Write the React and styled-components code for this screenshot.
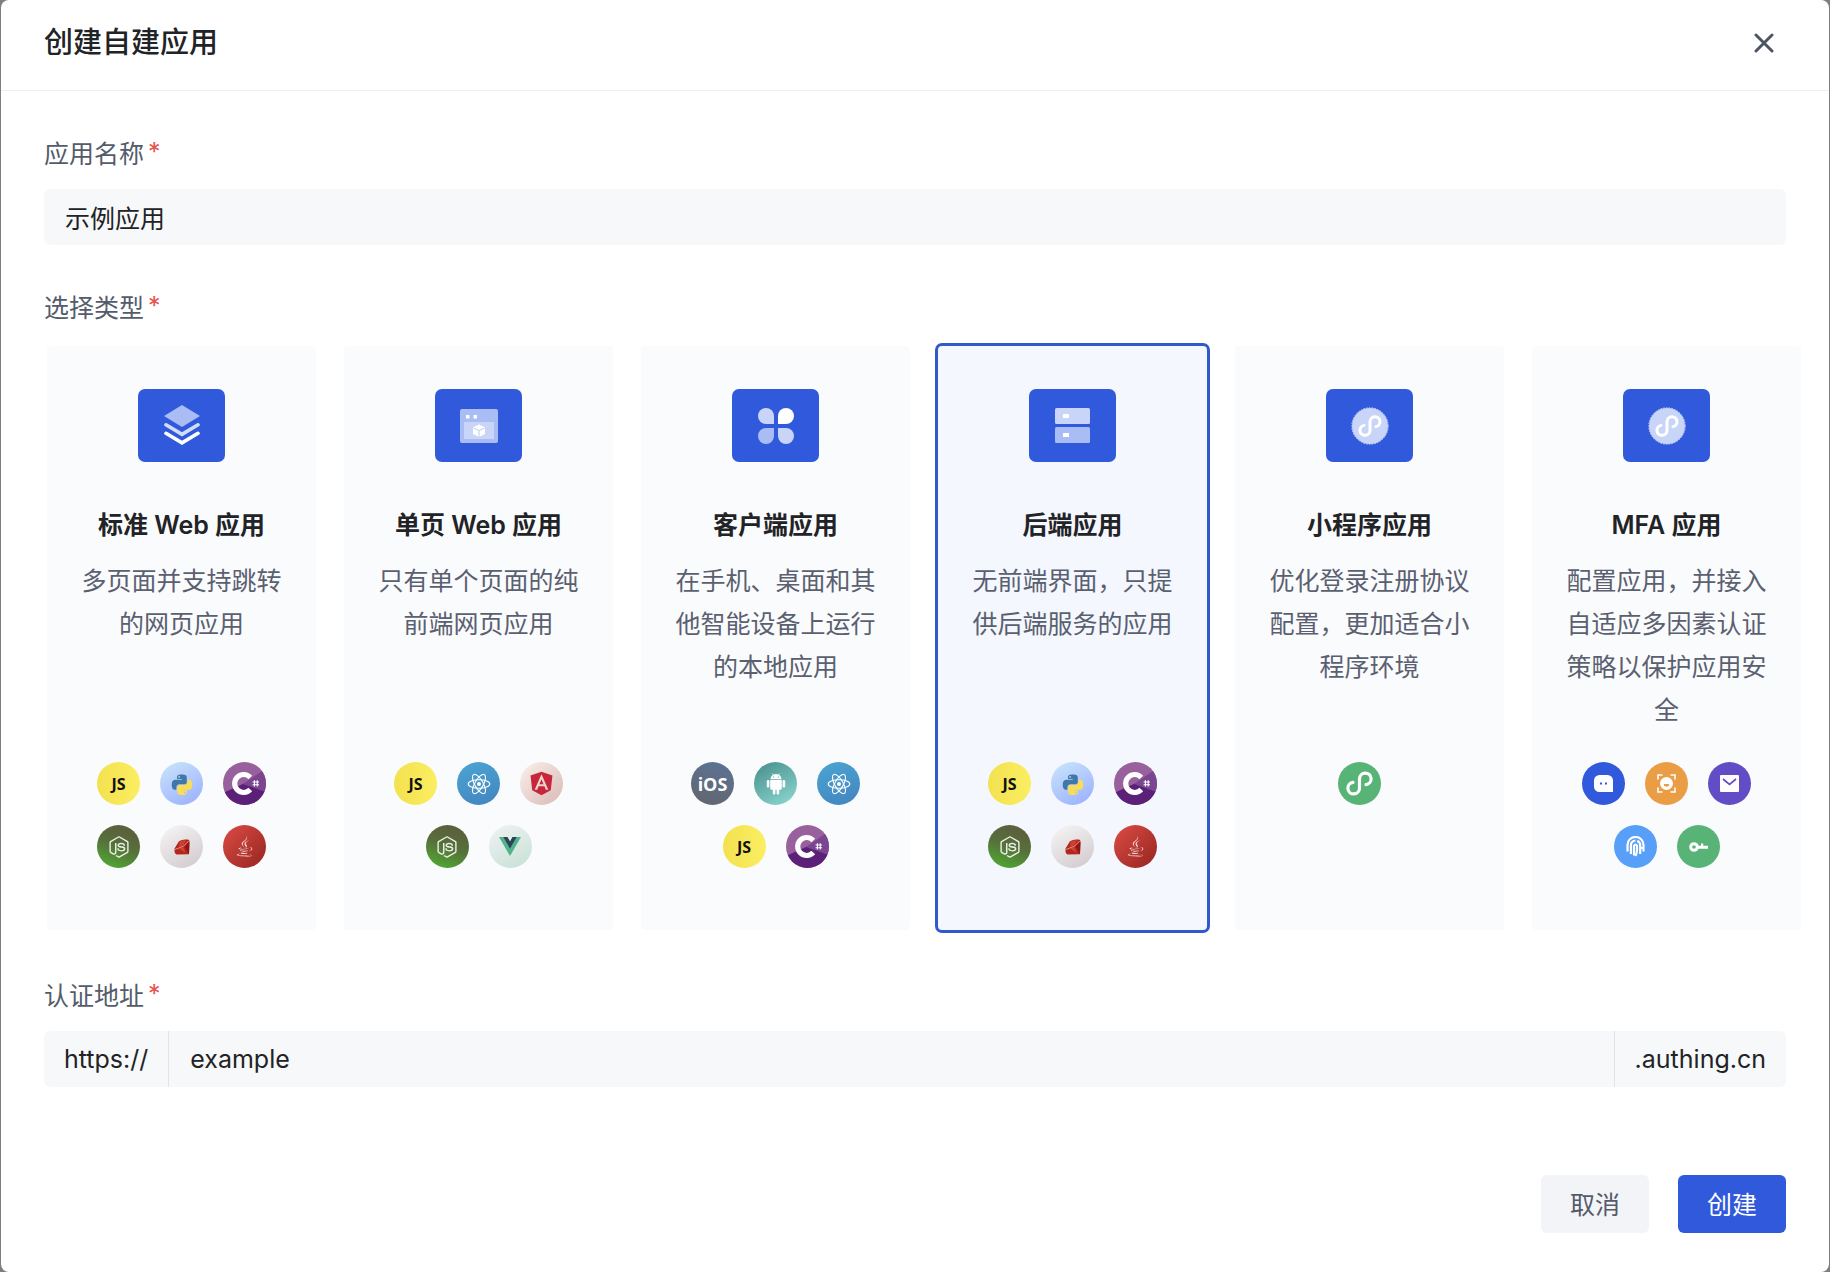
import React, { useState } from 'react'
import styled, { createGlobalStyle } from 'styled-components'
import { FaAngular, FaJava, FaNodeJs } from 'react-icons/fa'

const JsIcon = () => <BadgeText $color="#111" $size={16}>JS</BadgeText>

const IosIcon = () => <BadgeText $color="#fff" $size={18}>iOS</BadgeText>

const PythonIcon = () => (
  <svg width="22" height="22" viewBox="0 0 448 480">
    <path fill="#3f77a8" d="M167.8 248.1h106.8c29.7 0 53.4-24.5 53.4-54.3V91.9c0-29-24.4-50.7-53.4-55.6-35.8-5.9-74.7-5.6-106.8.1-45.2 8-53.4 24.7-53.4 55.6v40.7h106.9v13.6h-147c-31.1 0-58.3 18.7-66.8 54.2-9.8 40.7-10.2 66.1 0 108.6 7.6 31.6 25.7 54.2 56.8 54.2H101v-48.8c0-35.3 30.5-66.4 66.8-66.4zm-6.7-142.6c-11.1 0-20.1-9.1-20.1-20.3.1-11.3 9-20.4 20.1-20.4 11 0 20.1 9.2 20.1 20.4s-9 20.3-20.1 20.3z" />
    <path fill="#fbdc55" d="M439.8 200.5c-7.7-30.9-22.3-54.2-53.4-54.2h-40.1v47.4c0 36.8-31.2 67.8-66.8 67.8H172.7c-29.2 0-53.4 25-53.4 54.3v101.8c0 29 25.2 46 53.4 54.3 33.8 9.9 66.3 11.7 106.8 0 26.9-7.8 53.4-23.5 53.4-54.3v-40.7H226.2v-13.6h160.2c31.1 0 42.6-21.7 53.4-54.2 11.2-33.5 10.7-65.7 0-108.6zM286.2 404c11.1 0 20.1 9.1 20.1 20.3 0 11.3-9 20.4-20.1 20.4-11 0-20.1-9.2-20.1-20.4.1-11.3 9.1-20.3 20.1-20.3z" />
  </svg>
)

const CsharpIcon = () => (
  <svg width="43" height="43" viewBox="0 0 43 43">
    <path fill="#5b2077" d="M0 31L21 21.5 43 30v13H0z" />
    <path fill="#7b4690" d="M20 22L39 9l4 6v15z" />
    <path fill="none" stroke="#fff" strokeWidth="5.2" d="M27.3 15.4A9 9 0 1 0 27.3 27.6" />
    <path fill="none" stroke="#fff" strokeWidth="1.1" d="M31.4 18.2v6.4M34.2 18.2v6.4M29.6 20h6.4M29.6 22.8h6.4" />
  </svg>
)

const RubyIcon = () => (
  <svg width="16" height="16" viewBox="0 0 16 16">
    <path fill="#b3261c" d="M5 2.2Q8 .4 11.500 .5H14Q15.600 .8 15.500 3L15 15.200 2.500 15.500Q.3 15 .5 12V9.500z" />
    <path fill="#8e1710" d="M10.500 7.500L15.400 3 15 15z" />
    <path fill="#cf4034" d="M5.500 3Q9 .8 12 1.500L9.500 6 5 8zM5 9.500l4.500-1.500 2 6z" />
    <path fill="none" stroke="#eebbb4" strokeWidth="0.7" d="M.8 10.500L4.800 9l5-2L14.600 2" />
  </svg>
)

const ReactIcon = () => (
  <svg width="24" height="24" viewBox="-12 -12 24 24" fill="none" stroke="#fff" strokeWidth="1.1">
    <circle r="2" fill="#fff" stroke="none" />
    <ellipse rx="10.8" ry="4.2" />
    <ellipse rx="10.8" ry="4.2" transform="rotate(60)" />
    <ellipse rx="10.8" ry="4.2" transform="rotate(120)" />
  </svg>
)

const VueIcon = () => (
  <svg width="22" height="19" viewBox="0 0 22 19">
    <path fill="#51b389" d="M0 0h22L11 19z" />
    <path fill="#2f4358" d="M4.3 0H8.6L11 4.2 13.4 0h4.3L11 11.6z" />
    <path fill="#e5efec" d="M8.6 0h4.8L11 4.2z" />
  </svg>
)

const AndroidIcon = () => (
  <svg width="20" height="22" viewBox="0 0 20 22" fill="#fff">
    <path d="M4.5 6.3a5.5 5.3 0 0 1 11 0z" />
    <path d="M6.3 0.5l1.4 2M13.7 0.5l-1.4 2" stroke="#fff" strokeWidth="0.8" />
    <path d="M4.2 7h11.6v8.5a1.3 1.3 0 0 1-1.3 1.3h-1.3v3.4a1.3 1.3 0 0 1-2.6 0v-3.4H9.4v3.4a1.3 1.3 0 0 1-2.6 0v-3.4H5.5a1.3 1.3 0 0 1-1.3-1.3z" />
    <rect x="0.8" y="7" width="2.6" height="7.6" rx="1.3" />
    <rect x="16.6" y="7" width="2.6" height="7.6" rx="1.3" />
    <circle cx="7.6" cy="4" r="0.6" fill="#5aa7a2" />
    <circle cx="12.4" cy="4" r="0.6" fill="#5aa7a2" />
  </svg>
)

const MiniIcon = () => (
  <svg width="43" height="43" viewBox="0 0 43 43">
    <path
      fill="none"
      stroke="#fff"
      strokeWidth="3.2"
      strokeLinecap="round"
      d="M28 22.6A5.8 5.8 0 1 0 21.5 16.8V26.2A5.8 5.8 0 1 1 15 20.4"
    />
  </svg>
)

const MessageIcon = () => (
  <svg width="19" height="17" viewBox="0 0 19 17">
    <path fill="#fff" d="M5.5 0h8A5.5 5.5 0 0 1 19 5.5V17H5.5A5.5 5.5 0 0 1 0 11.5v-6A5.5 5.5 0 0 1 5.5 0z" />
    <path fill="#3059dc" d="M6 7.5h2v2H6zM11 7.5h2v2h-2z" />
  </svg>
)

const FaceIcon = () => (
  <svg width="19" height="19" viewBox="0 0 19 19">
    <path fill="none" stroke="#fff" strokeWidth="1.6" d="M1 5.5V1h4.5M13.5 1H18v4.5M18 13.5V18h-4.5M5.5 18H1v-4.5" />
    <circle cx="9.5" cy="9.5" r="6.5" fill="#fff" />
    <path fill="#eb9d45" d="M6.8 10h5.4a2.7 2.7 0 0 1-5.4 0z" />
  </svg>
)

const MailIcon = () => (
  <svg width="19" height="17" viewBox="0 0 19 17">
    <rect width="19" height="17" rx="1" fill="#fff" />
    <path fill="none" stroke="#634dc6" strokeWidth="1.7" d="M3 4l6.5 5.5L16 4" />
  </svg>
)

const FingerIcon = () => (
  <svg width="19" height="21" viewBox="0 0 19 21" fill="none" stroke="#fff" strokeWidth="2.2">
    <path d="M1.5 15.5V9a8 8 0 0 1 16 0v6.5" />
    <path d="M4.9 18V9.5a4.7 4.7 0 0 1 4.6-5M14.2 18V9.5a4.7 4.7 0 0 0-3-4.6" />
    <path d="M8 19.5V9.8q1.6-2.6 3 0V14q0 3-1.5 6" />
    <path d="M14 12h3.500" />
  </svg>
)

const KeyIcon = () => (
  <svg width="19" height="10" viewBox="0 0 19 10">
    <circle cx="5" cy="5" r="3.3" fill="none" stroke="#fff" strokeWidth="3" />
    <path fill="#fff" d="M8.5 3.7H12V1.5h2.2v2.2H19v3H8.5z" />
  </svg>
)

// 每个标志的背景和图标
const badges = {
  js: { bg: 'linear-gradient(90deg, #f3e14f, #fbee62)', icon: <JsIcon /> },
  python: { bg: 'linear-gradient(150deg, #cbe6fb, #98adff)', icon: <PythonIcon /> },
  csharp: { bg: '#98609c', icon: <CsharpIcon /> },
  node: { bg: 'linear-gradient(200deg, #5b613c 20%, #56713a 50%, #4eb32f)', icon: <FaNodeJs size={22} color="#e9efe6" /> },
  ruby: { bg: 'linear-gradient(150deg, #f7f6f7, #d0c8cb)', icon: <RubyIcon /> },
  java: { bg: 'linear-gradient(135deg, #dc4b45, #96251f)', icon: <FaJava size={21} color="#f6dcda" /> },
  react: { bg: 'linear-gradient(160deg, #4ba5d2, #4384bf)', icon: <ReactIcon /> },
  angular: { bg: 'linear-gradient(135deg, #faf0ea, #d8b9b6)', icon: <FaAngular size={27} color="#c7263b" /> },
  vue: { bg: 'linear-gradient(150deg, #f0f3f4, #c6e0d4)', icon: <VueIcon /> },
  ios: { bg: 'linear-gradient(200deg, #5a7398, #64656b)', icon: <IosIcon /> },
  android: { bg: 'linear-gradient(150deg, #458d8b, #8fdad3)', icon: <AndroidIcon /> },
  mini: { bg: '#58b376', icon: <MiniIcon /> },
  message: { bg: '#3059dc', icon: <MessageIcon /> },
  face: { bg: '#eb9d45', icon: <FaceIcon /> },
  mail: { bg: '#634dc6', icon: <MailIcon /> },
  finger: { bg: '#579ff8', icon: <FingerIcon /> },
  key: { bg: '#58b376', icon: <KeyIcon /> },
}

const LayersTile = () => (
  <svg width="36" height="42" viewBox="0 0 36 42">
    <path fill="#a9bdf4" d="M18 0l18 11-18 11L0 11z" />
    <path fill="none" stroke="#d3ddfa" strokeWidth="3.6" strokeLinecap="round" d="M2 19.8l16 9.5 16-9.5" />
    <path fill="none" stroke="#fff" strokeWidth="3.6" strokeLinecap="round" d="M2 28.3L18 37.8l16-9.5" />
  </svg>
)

const WindowTile = () => (
  <svg width="38" height="34" viewBox="0 0 38 34">
    <rect width="38" height="34" rx="2" fill="#a9bdf4" />
    <rect x="4" y="13" width="30" height="17" fill="#c8d5f9" />
    <path fill="#fff" d="M6 6h3.5v3.5H6zM13.5 6H17v3.5h-3.5z" />
    <path fill="#fff" d="M19 15.5l6 2.7v6.8l-6 3-6-3v-6.8z" />
    <path fill="none" stroke="#bccbf7" strokeWidth="1" d="M13.5 19l5.5 2.5 5.5-2.5M19 21.5V28" />
  </svg>
)

const PetalTile = () => (
  <svg width="36" height="36" viewBox="0 0 36 36">
    <path fill="#c8d5f9" d="M8 0a8 8 0 0 1 8 8v8H8A8 8 0 0 1 8 0z" />
    <path fill="#fff" d="M28 0a8 8 0 0 1 0 16h-8V8a8 8 0 0 1 8-8z" />
    <path fill="#a9bdf4" d="M8 20h8v8a8 8 0 1 1-8-8z" />
    <path fill="#c8d5f9" d="M20 20h8a8 8 0 1 1-8 8z" />
  </svg>
)

const ServerTile = () => (
  <svg width="35" height="35" viewBox="0 0 35 35">
    <rect width="35" height="16" rx="1.5" fill="#c8d5f9" />
    <rect y="19" width="35" height="16" rx="1.5" fill="#a9bdf4" />
    <path fill="#fff" d="M8 6h6v4H8zM8 25h6v4H8z" />
  </svg>
)

const MiniTile = () => (
  <svg width="38" height="38" viewBox="0 0 38 38">
    <circle cx="19" cy="19" r="18" fill="#c8d5f9" />
    <circle cx="19" cy="19" r="18.2" fill="none" stroke="#c8d5f9" strokeWidth="1" strokeDasharray="1.6 1.2" />
    <path
      fill="none"
      stroke="#fff"
      strokeWidth="3"
      strokeLinecap="round"
      d="M25 19.6A5 5 0 1 0 19 14.6V23.4A5 5 0 1 1 13 18.4"
    />
  </svg>
)

const appTypes = [
  { id: 'web', title: '标准 Web 应用', desc: '多页面并支持跳转的网页应用', tile: <LayersTile />, list: ['js', 'python', 'csharp', 'node', 'ruby', 'java'] },
  { id: 'spa', title: '单页 Web 应用', desc: '只有单个页面的纯前端网页应用', tile: <WindowTile />, list: ['js', 'react', 'angular', 'node', 'vue'] },
  { id: 'native', title: '客户端应用', desc: '在手机、桌面和其他智能设备上运行的本地应用', tile: <PetalTile />, list: ['ios', 'android', 'react', 'js', 'csharp'] },
  { id: 'backend', title: '后端应用', desc: '无前端界面，只提供后端服务的应用', tile: <ServerTile />, list: ['js', 'python', 'csharp', 'node', 'ruby', 'java'] },
  { id: 'mini', title: '小程序应用', desc: '优化登录注册协议配置，更加适合小程序环境', tile: <MiniTile />, list: ['mini'] },
  { id: 'mfa', title: 'MFA 应用', desc: '配置应用，并接入自适应多因素认证策略以保护应用安全', tile: <MiniTile />, list: ['message', 'face', 'mail', 'finger', 'key'] },
]

const App = () => {
  const [name, setName] = useState('示例应用')
  const [domain, setDomain] = useState('example')
  const [type, setType] = useState('backend')

  return (
    <>
      <GlobalStyle />
      <Modal role="dialog" aria-labelledby="modal-title">
        <Header>
          <Title id="modal-title">创建自建应用</Title>
          <CloseButton type="button" aria-label="关闭">
            <svg width="20" height="20" viewBox="0 0 20 20">
              <path fill="none" stroke="#4b5563" strokeWidth="3" strokeLinecap="round" d="M2 2l16 16M18 2L2 18" />
            </svg>
          </CloseButton>
        </Header>

        <Form onSubmit={(e) => e.preventDefault()}>
          <Field>
            <Label htmlFor="app-name">应用名称<Star>*</Star></Label>
            <InputBox>
              <Input id="app-name" type="text" value={name} onChange={(e) => setName(e.target.value)} />
            </InputBox>
          </Field>

          <Field role="radiogroup" aria-labelledby="type-label">
            <Label as="div" id="type-label">选择类型<Star>*</Star></Label>
            <CardList>
              {appTypes.map((item) => (
                <Card key={item.id} $active={type === item.id}>
                  <Radio name="type" value={item.id} checked={type === item.id} onChange={() => setType(item.id)} />
                  <Tile>{item.tile}</Tile>
                  <CardTitle>{item.title}</CardTitle>
                  <Desc>{item.desc}</Desc>
                  <BadgeList>
                    {item.list.map((key) => (
                      <Badge key={key} $bg={badges[key].bg}>{badges[key].icon}</Badge>
                    ))}
                  </BadgeList>
                </Card>
              ))}
            </CardList>
          </Field>

          <Field>
            <Label htmlFor="app-domain">认证地址<Star>*</Star></Label>
            <InputBox>
              <Addon $side="right">https://</Addon>
              <Input id="app-domain" type="text" value={domain} onChange={(e) => setDomain(e.target.value)} />
              <Addon $side="left">.authing.cn</Addon>
            </InputBox>
          </Field>

          <Footer>
            <Button type="button">取消</Button>
            <Button type="submit" $primary>创建</Button>
          </Footer>
        </Form>
      </Modal>
    </>
  )
}

export default App

const GlobalStyle = createGlobalStyle`
  * {
    box-sizing: border-box;
  }

  body {
    margin: 0;
    background: #7f7f7f;
    font-family: Inter, "Noto Sans CJK SC", sans-serif;
    font-size: 25px;
    color: #222326;
  }

  input, button {
    font: inherit;
    color: inherit;
  }
`

const Modal = styled.div`
  margin: 0 1px;
  background: #fff;
  border-radius: 8px;
`

const Header = styled.header`
  display: flex;
  justify-content: space-between;
  align-items: center;
  height: 91px;
  padding: 0 53px 5px 43px;
  border-bottom: 1px solid #eeeff1;
`

const Title = styled.h1`
  margin: 0;
  font-size: 29px;
  line-height: 40px;
  font-weight: 500;
`

const CloseButton = styled.button`
  display: flex;
  padding: 2px;
  border: none;
  background: none;
  cursor: pointer;
`

const Form = styled.form`
  display: flex;
  flex-direction: column;
  gap: 43px;
  padding: 43px 43px 39px;
`

const Field = styled.div`
  display: flex;
  flex-direction: column;
  gap: 15px;
`

const Label = styled.label`
  display: flex;
  gap: 4px;
  line-height: 40px;
  color: #545b6b;
`

const Star = styled.span`
  line-height: 36px;
  color: #e2564f;
`

const InputBox = styled.div`
  display: flex;
  height: 56px;
  border-radius: 6px;
  background: #f7f8fa;
  overflow: hidden;
`

const Input = styled.input`
  flex: 1;
  min-width: 0;
  padding: 0 21px;
  border: none;
  outline: none;
  background: transparent;
`

const Addon = styled.span`
  padding: 0 20px;
  line-height: 56px;
  border-${props => props.$side}: 1px solid #e2e4e8;
`

/* 最后一张卡片比输入框多出一点 */
const CardList = styled.div`
  display: grid;
  grid-template-columns: repeat(6, 1fr);
  gap: 22px;
  margin-right: -18px;
`

const Card = styled.label`
  position: relative;
  display: flex;
  flex-direction: column;
  align-items: center;
  padding: 43px 32px 62px;
  border: 3px solid ${props => props.$active ? "#3059cc" : "transparent"};
  border-radius: 7px;
  background: ${props => props.$active ? "#f4f7fe" : "#fafbfd"};
  background-clip: padding-box;
  cursor: pointer;
`

const Radio = styled.input.attrs({ type: 'radio' })`
  position: absolute;
  opacity: 0;
`

const Tile = styled.span`
  display: flex;
  align-items: center;
  justify-content: center;
  width: 87px;
  height: 73px;
  border-radius: 7px;
  background: #3059dc;
`

const CardTitle = styled.strong`
  margin-top: 43px;
  line-height: 40px;
  font-weight: 600;
  white-space: nowrap;
`

const Desc = styled.span`
  min-height: 172px;
  margin-top: 15px;
  line-height: 43px;
  text-align: center;
  color: #5a6070;
`

const BadgeList = styled.span`
  display: flex;
  flex-wrap: wrap;
  justify-content: center;
  align-content: flex-start;
  row-gap: 20px;
  width: 169px;
  min-height: 106px;
  margin-top: 30px;
`

/* 每行三个，行尾不留间距 */
const Badge = styled.span`
  display: flex;
  align-items: center;
  justify-content: center;
  width: 43px;
  height: 43px;
  margin-right: 20px;
  border-radius: 50%;
  background: ${props => props.$bg};
  overflow: hidden;

  &:nth-child(3n), &:nth-child(5):last-child {
    margin-right: 0;
  }
`

const BadgeText = styled.span`
  font-family: "Open Sans", sans-serif;
  font-size: ${props => props.$size}px;
  line-height: 20px;
  font-weight: 700;
  color: ${props => props.$color};
`

const Footer = styled.footer`
  display: flex;
  justify-content: flex-end;
  gap: 29px;
  margin-top: 45px;
`

const Button = styled.button`
  height: 58px;
  padding: 0 29px 2px;
  border: none;
  border-radius: 6px;
  background: ${props => props.$primary ? "#3059dc" : "#f3f4f7"};
  color: ${props => props.$primary ? "#fff" : "#545b6b"};
  cursor: pointer;
`
